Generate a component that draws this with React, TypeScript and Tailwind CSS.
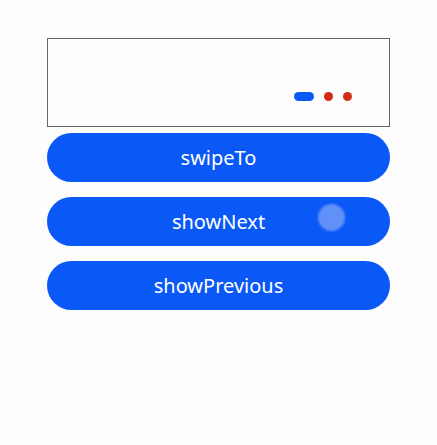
export default function App() {
  const buttons = ["swipeTo", "showNext", "showPrevious"];
  return (
    <div
      className="min-h-[445px] w-full bg-[#fdfdfd] pt-[38px]"
      style={{ fontFamily: '"Noto Sans", Inter, sans-serif' }}
    >
      <div className="mx-auto flex w-[343px] flex-col">
        <div className="relative h-[89px] border border-[#666666] bg-[#fefefe]">
          <div className="absolute left-[246px] top-[53px] flex items-center gap-[10px]">
            <div className="h-[9px] w-[20px] rounded-full bg-[#0a59f7]" />
            <div className="h-[9px] w-[9px] rounded-full bg-[#d22a17]" />
            <div className="h-[9px] w-[9px] rounded-full bg-[#d22a17]" />
          </div>
        </div>
        <div className="mt-[6px] flex flex-col gap-[15px]">
          {buttons.map((label) => (
            <button
              key={label}
              className="relative flex h-[49px] w-full items-center justify-center rounded-full bg-[#0a59f7] text-[20px] font-normal text-white"
            >
              {label}
              {label === "showNext" && (
                <span className="absolute left-[271px] top-[7px] h-[27px] w-[27px] rounded-full bg-[#6b97fa] opacity-90 blur-[1px]" />
              )}
            </button>
          ))}
        </div>
      </div>
    </div>
  );
}
